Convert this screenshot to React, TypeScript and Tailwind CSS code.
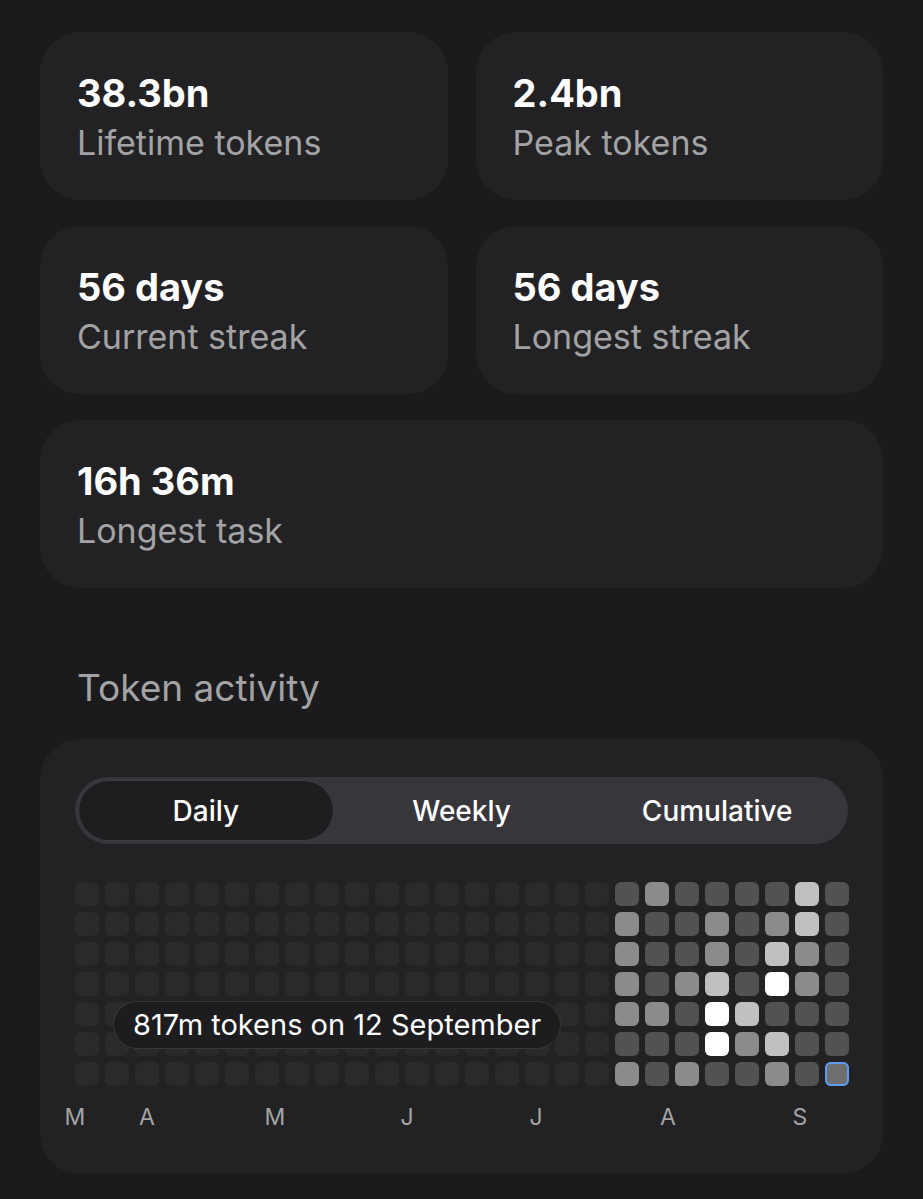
import React from "react";

const stats = [
  { value: "38.3bn", label: "Lifetime tokens" },
  { value: "2.4bn", label: "Peak tokens" },
  { value: "56 days", label: "Current streak" },
  { value: "56 days", label: "Longest streak" },
];

// levels for the last 8 weeks (rows = days), -1 marks the selected day
const recent = [
  [1, 2, 1, 1, 1, 1, 3, 1],
  [2, 1, 1, 2, 1, 2, 3, 1],
  [2, 1, 1, 2, 1, 3, 2, 1],
  [2, 1, 2, 3, 1, 4, 2, 1],
  [2, 2, 1, 4, 3, 1, 1, 1],
  [1, 1, 1, 4, 2, 3, 1, 1],
  [2, 1, 2, 1, 1, 2, 1, -1],
];

const WEEKS = 26;
const levelClass: Record<number, string> = {
  0: "bg-[#2a2a2c]",
  1: "bg-[#525254]",
  2: "bg-[#8b8b8b]",
  3: "bg-[#c0c0c0]",
  4: "bg-white",
  [-1]: "bg-[#6e6e70] ring-2 ring-[#5b9cf0] ring-inset",
};

const months = [
  { label: "M", x: 0 },
  { label: "A", x: 72 },
  { label: "M", x: 200 },
  { label: "J", x: 332 },
  { label: "J", x: 461 },
  { label: "A", x: 593 },
  { label: "S", x: 725 },
];

function StatCard({ value, label, wide }: { value: string; label: string; wide?: boolean }) {
  return (
    <div
      className={`rounded-[40px] bg-[#222224] px-[37px] py-[38px] ${wide ? "col-span-2" : ""}`}
    >
      <div className="text-[38px] font-bold leading-[46px] text-white">{value}</div>
      <div className="mt-[7px] text-[34px] leading-[39px] text-[#a3a3a5]">{label}</div>
    </div>
  );
}

function Heatmap() {
  const cells: number[] = [];
  for (let w = 0; w < WEEKS; w++) {
    for (let d = 0; d < 7; d++) {
      const r = w - (WEEKS - 8);
      cells.push(r >= 0 ? recent[d][r] : 0);
    }
  }

  return (
    <div className="relative w-[774px]">
      <div className="grid grid-flow-col grid-rows-[repeat(7,24px)] auto-cols-[24px] gap-[6px]">
        {cells.map((lvl, i) => (
          <div key={i} className={`h-[24px] w-[24px] rounded-[6px] ${levelClass[lvl]}`} />
        ))}
      </div>

      {/* Tooltip */}
      <div className="absolute left-[38px] top-[119px] flex h-[48px] items-center rounded-full border border-[#38383a] bg-[#1d1d1f] px-[19px] text-[29px] text-white">
        817m tokens on 12 September
      </div>

      {/* Month labels */}
      <div className="relative mt-[17px] h-[28px] text-[23px] leading-[28px] text-[#a3a3a5]">
        {months.map((m, i) => (
          <span key={i} className="absolute top-0 -translate-x-1/2" style={{ left: m.x }}>
            {m.label}
          </span>
        ))}
      </div>
    </div>
  );
}

export default function App() {
  return (
    <div
      className="min-h-[1199px] bg-[#1b1b1d] px-[40px] pt-[32px] pb-[27px]"
      style={{ fontFamily: "Inter, 'Noto Sans', sans-serif" }}
    >
      <div className="grid grid-cols-2 gap-x-[28px] gap-y-[26px]">
        {stats.map((s, i) => (
          <StatCard key={i} value={s.value} label={s.label} />
        ))}
        <StatCard value="16h 36m" label="Longest task" wide />
      </div>

      <h2 className="mt-[78px] px-[37px] text-[37px] leading-[44px] text-[#a3a3a5]">Token activity</h2>

      <div className="mt-[29px] rounded-[40px] bg-[#222224] px-[35px] pt-[38px] pb-[43px]">
        {/* Segmented control */}
        <div className="grid h-[67px] grid-cols-3 rounded-full bg-[#37373b] p-[3px] text-[28px] font-medium text-white">
          <div className="flex items-center justify-center rounded-full border border-[#3e3e42] bg-[#1e1e20]">
            Daily
          </div>
          <div className="flex items-center justify-center">Weekly</div>
          <div className="flex items-center justify-center">Cumulative</div>
        </div>

        <div className="mt-[38px]">
          <Heatmap />
        </div>
      </div>
    </div>
  );
}
